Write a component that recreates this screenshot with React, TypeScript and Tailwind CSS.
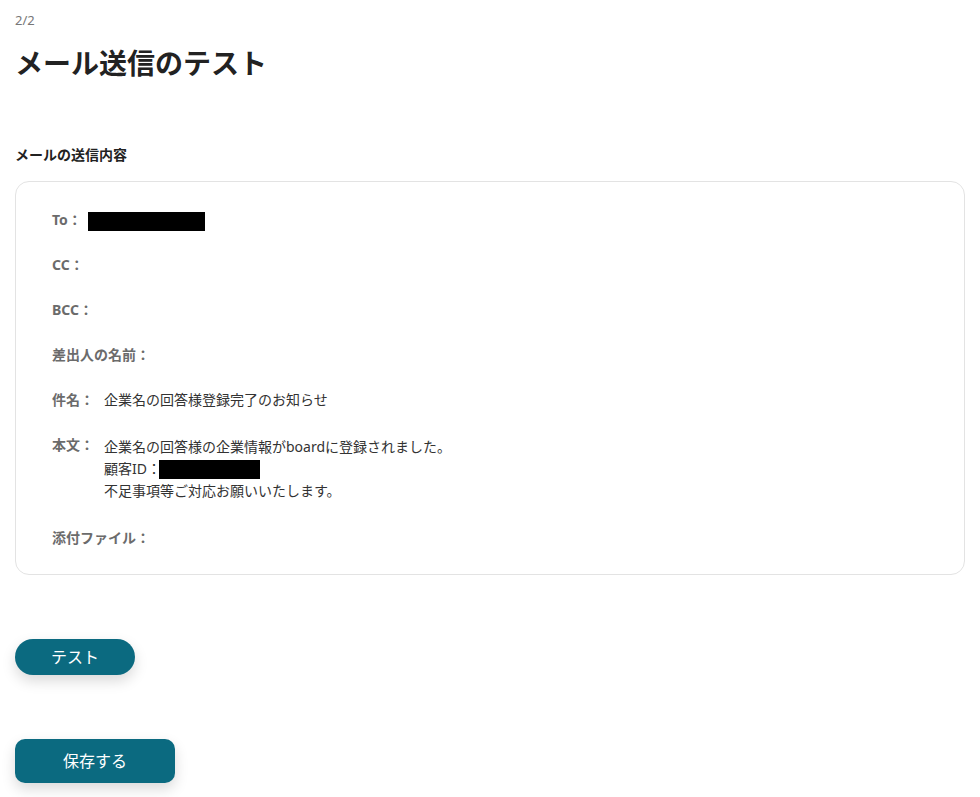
import React from 'react';

const Row = ({ label, children, className = '' }: { label: string; children?: React.ReactNode; className?: string }) => (
  <div className={`flex items-start leading-[22px] ${className}`}>
    <span className="shrink-0 font-bold text-[#6b6b6b]">{label}</span>
    {children}
  </div>
);

const App = () => {
  return (
    <div
      className="min-h-screen bg-white px-[15px] pt-[11px] pb-[14px] text-[#333]"
      style={{ fontFamily: '"Noto Sans", "Noto Sans CJK JP", sans-serif' }}
    >
      <div className="text-[13px] leading-[18px] text-[#777]">2/2</div>
      <h1 className="mt-[15px] text-[28px] font-bold leading-[38px] text-[#222]">メール送信のテスト</h1>

      <div className="mt-[62px] text-[14px] font-bold leading-[22px] text-[#222]">メールの送信内容</div>

      <div className="mt-[15px] flex flex-col gap-[23px] rounded-[14px] border border-[#e3e3e3] px-[36px] pt-[27px] pb-[25px] text-[14px]">
        <Row label="To：">
          <span className="ml-[6px] mt-[3px] inline-block h-[19px] w-[117px] bg-black" />
        </Row>
        <Row label="CC：" />
        <Row label="BCC：" />
        <Row label="差出人の名前：" />
        <Row label="件名：">
          <span className="ml-[10px]">企業名の回答様登録完了のお知らせ</span>
        </Row>
        <Row label="本文：">
          <div className="ml-[10px] mt-[2px]">
            <div>企業名の回答様の企業情報がboardに登録されました。</div>
            <div className="flex items-center">
              顧客ID：
              <span className="-ml-[2px] inline-block h-[19px] w-[101px] bg-black" />
            </div>
            <div>不足事項等ご対応お願いいたします。</div>
          </div>
        </Row>
        <Row label="添付ファイル：" className="mt-[2px]" />
      </div>

      <button
        type="button"
        className="mt-[64px] block h-[36px] w-[120px] rounded-full bg-[#0b6a80] text-[16px] text-white shadow-[0_6px_14px_rgba(0,0,0,0.15)]"
      >
        テスト
      </button>

      <button
        type="button"
        className="mt-[64px] block h-[44px] w-[160px] rounded-[10px] bg-[#0b6a80] text-[16px] text-white shadow-[0_6px_14px_rgba(0,0,0,0.15)]"
      >
        保存する
      </button>
    </div>
  );
};

export default App;
